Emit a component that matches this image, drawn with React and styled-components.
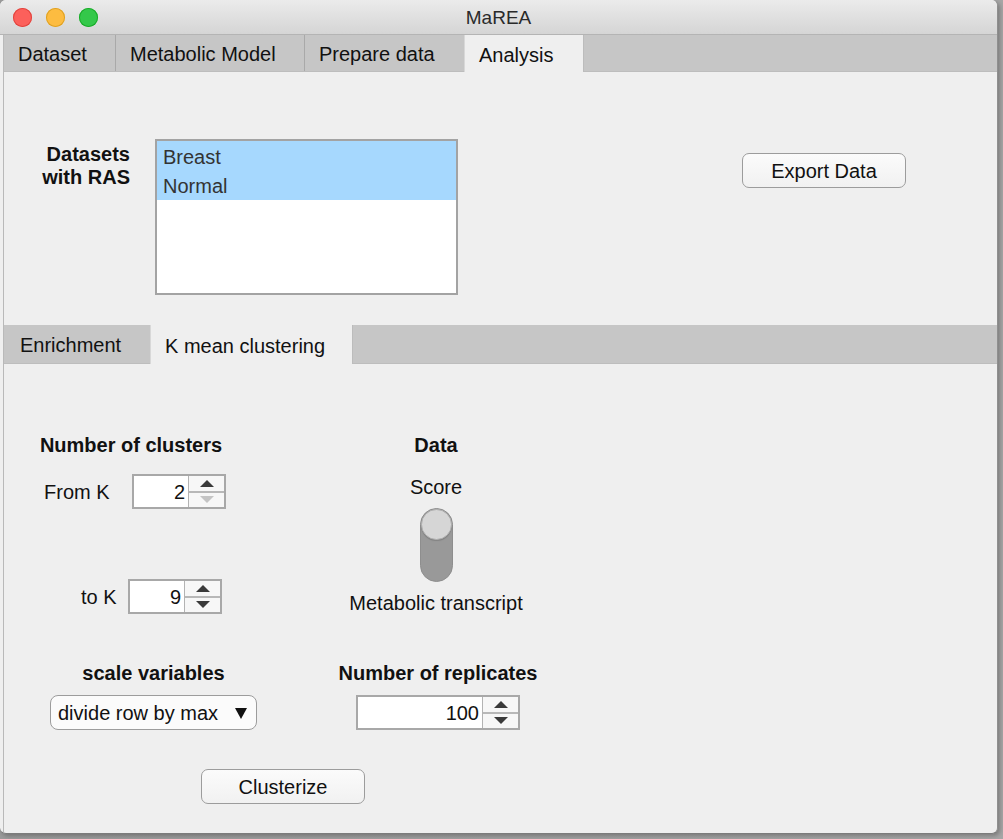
import React from 'react';
import styled, { createGlobalStyle } from 'styled-components';

const GlobalStyle = createGlobalStyle`
  html, body {
    margin: 0;
    padding: 0;
    background: #9a9a9a;
    font-family: "Liberation Sans", Arial, Helvetica, sans-serif;
    color: #111;
  }
`;

const Desktop = styled.div`
  width: 1003px;
  height: 839px;
  overflow: hidden;
  background: linear-gradient(90deg, #9a9a9a 0%, #a6a6a6 100%);
`;

const Window = styled.div`
  width: 998px;
  height: 834px;
  display: flex;
  flex-direction: column;
  background: #efefef;
  border-radius: 6px;
  border-right: 1px solid #8f8f8f;
  border-bottom: 1px solid #7c7c7c;
  box-sizing: border-box;
  overflow: hidden;
  box-shadow: 2px 2px 4px rgba(0, 0, 0, 0.25);
`;

const TitleBar = styled.div`
  height: 35px;
  flex: none;
  display: flex;
  align-items: center;
  position: relative;
  background: linear-gradient(#ebebeb, #d5d5d5);
  border-bottom: 1px solid #b4b4b4;
  box-sizing: border-box;
`;

const Lights = styled.div`
  display: flex;
  gap: 14px;
  padding-left: 13px;
  padding-top: 1px;
`;

const Light = styled.span`
  width: 19px;
  height: 19px;
  border-radius: 50%;
  background: ${(p) => p.color};
  box-shadow: inset 0 0 0 1px ${(p) => p.edge};
`;

const Title = styled.div`
  position: absolute;
  left: 0;
  right: 0;
  text-align: center;
  font-size: 19px;
  color: #2a2a2a;
  padding-top: 1px;
`;

const Frame = styled.div`
  flex: 1;
  display: flex;
  flex-direction: column;
  margin-left: 3px;
  border-left: 1px solid #b9b9b9;
`;

const TabBar = styled.div`
  height: 37px;
  flex: none;
  display: flex;
  background: #c6c6c6;
  border-bottom: 1px solid #bdbdbd;
  box-sizing: border-box;
`;

const Tab = styled.div`
  height: ${(p) => (p.active ? '37px' : '36px')};
  width: ${(p) => p.w}px;
  box-sizing: border-box;
  padding-left: ${(p) => p.pad || 14}px;
  padding-top: 3px;
  display: flex;
  align-items: center;
  font-size: 20px;
  color: #111;
  background: ${(p) => (p.active ? '#efefef' : '#c6c6c6')};
  border-right: 1px solid #a9a9a9;
  ${(p) => p.active && 'border-left: 1px solid #d8d8d8; border-right: 1px solid #bcbcbc; margin-left: -1px;'}
`;

const TopSection = styled.div`
  height: 253px;
  flex: none;
  display: flex;
  align-items: flex-start;
  padding-top: 67px;
  box-sizing: border-box;
`;

const SideLabel = styled.div`
  width: 90px;
  margin-left: 36px;
  margin-top: 4px;
  text-align: right;
  font-size: 20px;
  font-weight: bold;
  line-height: 23px;
`;

const ListBox = styled.div`
  width: 303px;
  height: 156px;
  margin-left: 25px;
  box-sizing: border-box;
  border: 2px solid #a3a3a3;
  background: #fff;
`;

const ListItem = styled.div`
  height: 29.5px;
  padding-left: 6px;
  padding-top: 3px;
  box-sizing: border-box;
  display: flex;
  align-items: center;
  font-size: 20px;
  color: #333;
  background: ${(p) => (p.selected ? '#a6d8fe' : '#fff')};
`;

const PushButton = styled.div`
  width: ${(p) => p.w}px;
  height: 35px;
  box-sizing: border-box;
  border: 1px solid #9c9c9c;
  border-radius: 7px;
  background: linear-gradient(#fbfbfb, #f1f1f1);
  display: flex;
  align-items: center;
  justify-content: center;
  padding-top: 2px;
  font-size: 20px;
  color: #111;
`;

const ExportSlot = styled.div`
  margin-left: 284px;
  margin-top: 14px;
`;

const InnerTabBar = styled(TabBar)`
  height: 39px;
  padding-left: 2px;
`;

const InnerTab = styled(Tab)`
  height: ${(p) => (p.active ? '39px' : '38px')};
`;

const ClusterPanel = styled.div`
  flex: 1;
  display: flex;
  flex-direction: column;
  padding-top: 70px;
`;

const Row = styled.div`
  display: flex;
  align-items: flex-start;
  margin-top: ${(p) => p.mt || 0}px;
  padding-left: ${(p) => p.pl || 0}px;
`;

const Group = styled.div`
  display: flex;
  flex-direction: column;
  align-items: ${(p) => p.align || 'center'};
  width: ${(p) => p.w}px;
  margin-left: ${(p) => p.ml}px;
`;

const Heading = styled.div`
  font-size: 20px;
  font-weight: bold;
  line-height: 22px;
  text-align: center;
  align-self: center;
  white-space: nowrap;
`;

const Text = styled.div`
  font-size: 20px;
  line-height: 22px;
  white-space: nowrap;
  margin-top: ${(p) => p.mt || 0}px;
`;

const FieldRow = styled.div`
  display: flex;
  align-items: center;
  margin-top: ${(p) => p.mt}px;
  padding-left: ${(p) => p.pl}px;
`;

const FieldLabel = styled(Text)`
  width: ${(p) => p.w}px;
`;

const SpinSlot = styled.div`
  margin-top: 11px;
`;

const Spinner = styled.div`
  display: flex;
  height: 35px;
  box-sizing: border-box;
  border: 2px solid #a8a8a8;
  background: #fff;
`;

const SpinValue = styled.div`
  width: ${(p) => p.w}px;
  box-sizing: border-box;
  padding-right: 3px;
  padding-top: 1px;
  text-align: right;
  font-size: 20px;
  line-height: 31px;
  color: #111;
  border-right: 1px solid #b3b3b3;
`;

const SpinArrows = styled.div`
  width: 35px;
  display: flex;
  flex-direction: column;
  background: #f7f7f7;
`;

const Arrow = styled.div`
  flex: 1;
  display: flex;
  align-items: center;
  justify-content: center;
  ${(p) => p.up && 'border-bottom: 2px solid #b8b8b8;'}
  &::after {
    content: '';
    border-left: 7px solid transparent;
    border-right: 7px solid transparent;
    ${(p) =>
      p.up
        ? `border-bottom: 7px solid ${p.off ? '#c4c4c4' : '#3a3a3a'};`
        : `border-top: 7px solid ${p.off ? '#c4c4c4' : '#3a3a3a'};`}
  }
`;

const Toggle = styled.div`
  width: 33px;
  height: 74px;
  margin-top: 10px;
  border-radius: 17px;
  background: #999;
  box-sizing: border-box;
  border: 1px solid #8e8e8e;
  display: flex;
  flex-direction: column;
  align-items: center;
`;

const Knob = styled.div`
  width: 31px;
  height: 31px;
  border-radius: 50%;
  background: #d6d6d6;
  border: 1px solid #b0b0b0;
  box-sizing: border-box;
  box-shadow: 0 1px 1px rgba(0, 0, 0, 0.15);
`;

const Dropdown = styled.div`
  width: 207px;
  height: 35px;
  margin-top: 11px;
  box-sizing: border-box;
  border: 1px solid #9c9c9c;
  border-radius: 8px;
  background: #fbfbfb;
  display: flex;
  align-items: center;
  justify-content: space-between;
  padding: 2px 9px 0 7px;
  font-size: 20px;
  color: #111;
`;

const Caret = styled.span`
  width: 0;
  height: 0;
  border-left: 6px solid transparent;
  border-right: 6px solid transparent;
  border-top: 11px solid #111;
`;

function NumberSpinner({ value, width, lowDisabled }) {
  return (
    <Spinner>
      <SpinValue w={width}>{value}</SpinValue>
      <SpinArrows>
        <Arrow up />
        <Arrow off={lowDisabled} />
      </SpinArrows>
    </Spinner>
  );
}

export default function App() {
  return (
    <Desktop>
      <GlobalStyle />
      <Window>
        <TitleBar>
          <Lights>
            <Light color="#fc605b" edge="#e0443e" />
            <Light color="#fdbc40" edge="#dea123" />
            <Light color="#34c84a" edge="#1aab29" />
          </Lights>
          <Title>MaREA</Title>
        </TitleBar>
        <Frame>
          <TabBar>
            <Tab w={112}>Dataset</Tab>
            <Tab w={189}>Metabolic Model</Tab>
            <Tab w={160}>Prepare data</Tab>
            <Tab w={120} active>Analysis</Tab>
          </TabBar>
          <TopSection>
            <SideLabel>Datasets with RAS</SideLabel>
            <ListBox>
              <ListItem selected>Breast</ListItem>
              <ListItem selected>Normal</ListItem>
            </ListBox>
            <ExportSlot>
              <PushButton w={164}>Export Data</PushButton>
            </ExportSlot>
          </TopSection>
          <InnerTabBar>
            <InnerTab w={145}>Enrichment</InnerTab>
            <InnerTab w={203} active>K mean clustering</InnerTab>
          </InnerTabBar>
          <ClusterPanel>
            <Row>
              <Group w={180} ml={37} align="flex-start">
                <Heading>Number of clusters</Heading>
                <FieldRow mt={18} pl={3}>
                  <FieldLabel w={88}>From K</FieldLabel>
                  <NumberSpinner value="2" width={55} lowDisabled />
                </FieldRow>
                <FieldRow mt={70} pl={40}>
                  <FieldLabel w={47}>to K</FieldLabel>
                  <NumberSpinner value="9" width={55} />
                </FieldRow>
              </Group>
              <Group w={200} ml={115}>
                <Heading>Data</Heading>
                <Text mt={20}>Score</Text>
                <Toggle>
                  <Knob />
                </Toggle>
                <Text mt={10}>Metabolic transcript</Text>
              </Group>
            </Row>
            <Row mt={48}>
              <Group w={207} ml={46}>
                <Heading>scale variables</Heading>
                <Dropdown>
                  divide row by max
                  <Caret />
                </Dropdown>
              </Group>
              <Group w={210} ml={76}>
                <Heading>Number of replicates</Heading>
                <SpinSlot>
                  <NumberSpinner value="100" width={125} />
                </SpinSlot>
              </Group>
            </Row>
            <Row mt={39} pl={197}>
              <PushButton w={164}>Clusterize</PushButton>
            </Row>
          </ClusterPanel>
        </Frame>
      </Window>
    </Desktop>
  );
}
